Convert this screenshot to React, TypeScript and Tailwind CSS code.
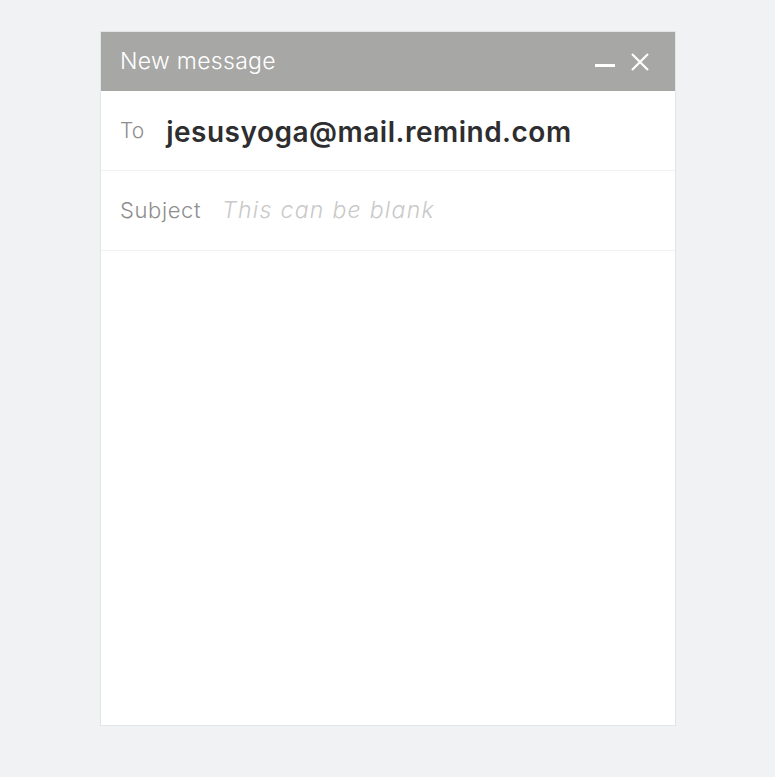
const MinimizeIcon = () => (
  <svg width="20" height="20" viewBox="0 0 20 20" className="block">
    <rect x="0" y="12" width="20" height="3" fill="currentColor" />
  </svg>
);

const CloseIcon = () => (
  <svg width="18" height="18" viewBox="0 0 18 18" className="block">
    <path d="M1 1 L17 17 M17 1 L1 17" stroke="currentColor" strokeWidth="2.2" />
  </svg>
);

const App = () => {
  return (
    <div className="min-h-[777px] bg-[#f1f2f4] pl-[100px] pt-[31px] font-['Inter',sans-serif]">
      <div className="w-[576px] h-[695px] flex flex-col bg-white border border-[#e3e4e6]">
        <header className="h-[59px] px-[19px] flex items-center justify-between bg-[#a7a7a5] text-white">
          <p className="text-[23px] font-light tracking-[0.3px]">New message</p>
          <div className="flex items-center gap-[16px] pr-[7px]">
            <MinimizeIcon />
            <CloseIcon />
          </div>
        </header>

        <div className="h-[80px] px-[19px] flex items-center gap-[22px] border-b border-[#f1f1f1]">
          <span className="text-[21px] font-light text-[#8e8e8e]">To</span>
          <span className="text-[28px] font-semibold tracking-[0.5px] text-[#2e2e30] pt-[2px]">
            jesusyoga@mail.remind.com
          </span>
        </div>

        <div className="h-[80px] px-[19px] flex items-center gap-[21px] border-b border-[#f1f1f1]">
          <span className="text-[22px] font-light tracking-[0.6px] text-[#8e8e8e]">Subject</span>
          <span className="text-[23px] font-light italic tracking-[1.3px] text-[#c9c9c9]">
            This can be blank
          </span>
        </div>

        <div className="flex-1" />
      </div>
    </div>
  );
};

export default App;
